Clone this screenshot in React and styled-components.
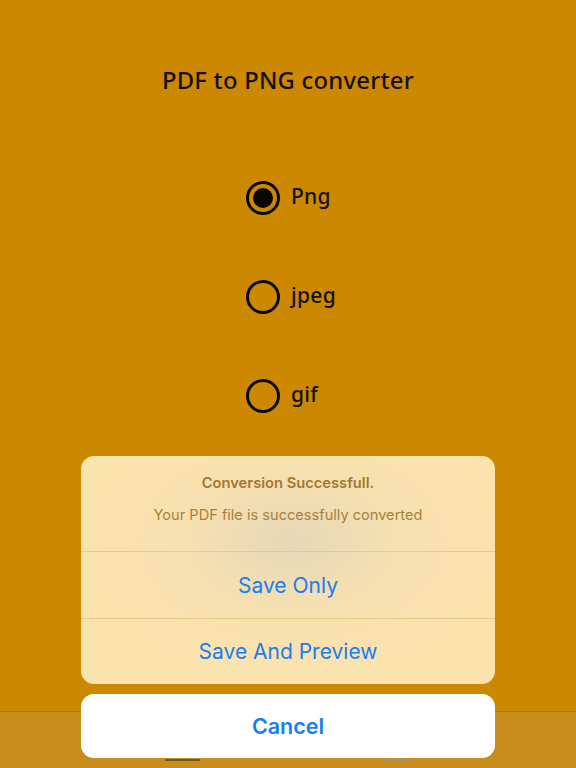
import React, { useState } from "react";
import styled, { createGlobalStyle } from "styled-components";

const Global = createGlobalStyle`
  html, body { margin: 0; padding: 0; height: 100%; }
  body { background: #cc8800; font-family: "Noto Sans", sans-serif; }
  #root { height: 100%; }
`;

const Screen = styled.div`
  position: relative;
  width: 576px;
  height: 768px;
  overflow: hidden;
  background: #cc8800;
  display: flex;
  flex-direction: column;
`;

const Main = styled.main`
  flex: 1;
  display: flex;
  flex-direction: column;
  align-items: center;
`;

const Title = styled.h1`
  margin: 63px 0 0;
  font-family: "Noto Sans", sans-serif;
  font-weight: 500;
  font-size: 23.8px;
  line-height: 34px;
  color: #141006;
  letter-spacing: 0.25px;
`;

const Options = styled.div`
  margin-top: 84px;
  display: flex;
  flex-direction: column;
  gap: 65px;
  align-self: flex-start;
  margin-left: 246px;
`;

const Option = styled.label`
  display: flex;
  align-items: center;
  gap: 11px;
  height: 34px;
  cursor: pointer;
`;

const Circle = styled.span`
  box-sizing: border-box;
  width: 34px;
  height: 34px;
  border-radius: 50%;
  border: 3px solid #0a0700;
  display: flex;
  align-items: center;
  justify-content: center;
  &::after {
    content: "";
    display: ${(p) => (p.$on ? "block" : "none")};
    width: 20px;
    height: 20px;
    border-radius: 50%;
    background: #0a0700;
  }
`;

const Label = styled.span`
  font-family: "Noto Sans", sans-serif;
  font-weight: 500;
  font-size: 21px;
  letter-spacing: 0.3px;
  color: #141006;
  margin-top: -4px;
`;

const Toolbar = styled.footer`
  height: 57px;
  border-top: 1px solid #b27a0c;
  background: #c98d1e;
  display: flex;
  align-items: flex-end;
  padding-bottom: 7px;
  box-sizing: border-box;
`;

const ToolItem = styled.span`
  display: block;
  height: 2px;
  width: ${(p) => p.$w}px;
  margin-left: ${(p) => p.$ml}px;
  background: ${(p) => p.$c};
  border-radius: 1px;
`;

const Overlay = styled.div`
  position: absolute;
  inset: 0;
  display: flex;
  flex-direction: column;
  justify-content: flex-end;
  align-items: center;
  padding-bottom: 10px;
  gap: 10px;
  box-sizing: border-box;
`;

const Group = styled.div`
  width: 414px;
  border-radius: 13px;
  overflow: hidden;
  background:
    radial-gradient(ellipse 200px 130px at 51% 38%, rgba(214, 206, 192, 0.55), rgba(230, 215, 185, 0.2) 55%, rgba(251, 227, 174, 0) 100%),
    #fbe3ae;
`;

const Header = styled.div`
  height: 96px;
  box-sizing: border-box;
  padding: 18px 20px 0;
  display: flex;
  flex-direction: column;
  align-items: center;
  gap: 13px;
  border-bottom: 1px solid #e7c98a;
`;

const SheetTitle = styled.div`
  font-family: "Inter", sans-serif;
  font-weight: 600;
  font-size: 14.7px;
  color: #a4782c;
  line-height: 18px;
`;

const Message = styled.div`
  font-family: "Inter", sans-serif;
  font-weight: 400;
  font-size: 14.6px;
  color: #a8803a;
  line-height: 20px;
`;

const Action = styled.button`
  display: flex;
  width: 100%;
  height: ${(p) => p.$h || 66}px;
  align-items: center;
  justify-content: center;
  border: none;
  background: transparent;
  font-family: "Inter", sans-serif;
  font-size: 21px;
  color: #1a7df0;
  padding: 0;
  cursor: pointer;
  & + & { border-top: 1px solid #e7c98a; }
`;

const CancelBtn = styled.button`
  width: 414px;
  height: 64px;
  border: none;
  border-radius: 13px;
  background: #ffffff;
  font-family: "Inter", sans-serif;
  font-weight: 600;
  font-size: 21.5px;
  color: #1a7df0;
  cursor: pointer;
`;

const options = ["Png", "jpeg", "gif"];

export default function App() {
  const [sel, setSel] = useState("Png");
  return (
    <Screen>
      <Global />
      <Main>
        <Title>PDF to PNG converter</Title>
        <Options>
          {options.map((o) => (
            <Option key={o} onClick={() => setSel(o)}>
              <Circle $on={sel === o} />
              <Label>{o}</Label>
            </Option>
          ))}
        </Options>
      </Main>
      <Toolbar>
        <ToolItem $w={35} $ml={165} $c="#6e5620" />
        <ToolItem $w={27} $ml={183} $c="#a89268" />
      </Toolbar>
      <Overlay>
        <Group>
          <Header>
            <SheetTitle>Conversion Successfull.</SheetTitle>
            <Message>Your PDF file is successfully converted</Message>
          </Header>
          <Action $h={66}>Save Only</Action>
          <Action $h={66}>Save And Preview</Action>
        </Group>
        <CancelBtn>Cancel</CancelBtn>
      </Overlay>
    </Screen>
  );
}
